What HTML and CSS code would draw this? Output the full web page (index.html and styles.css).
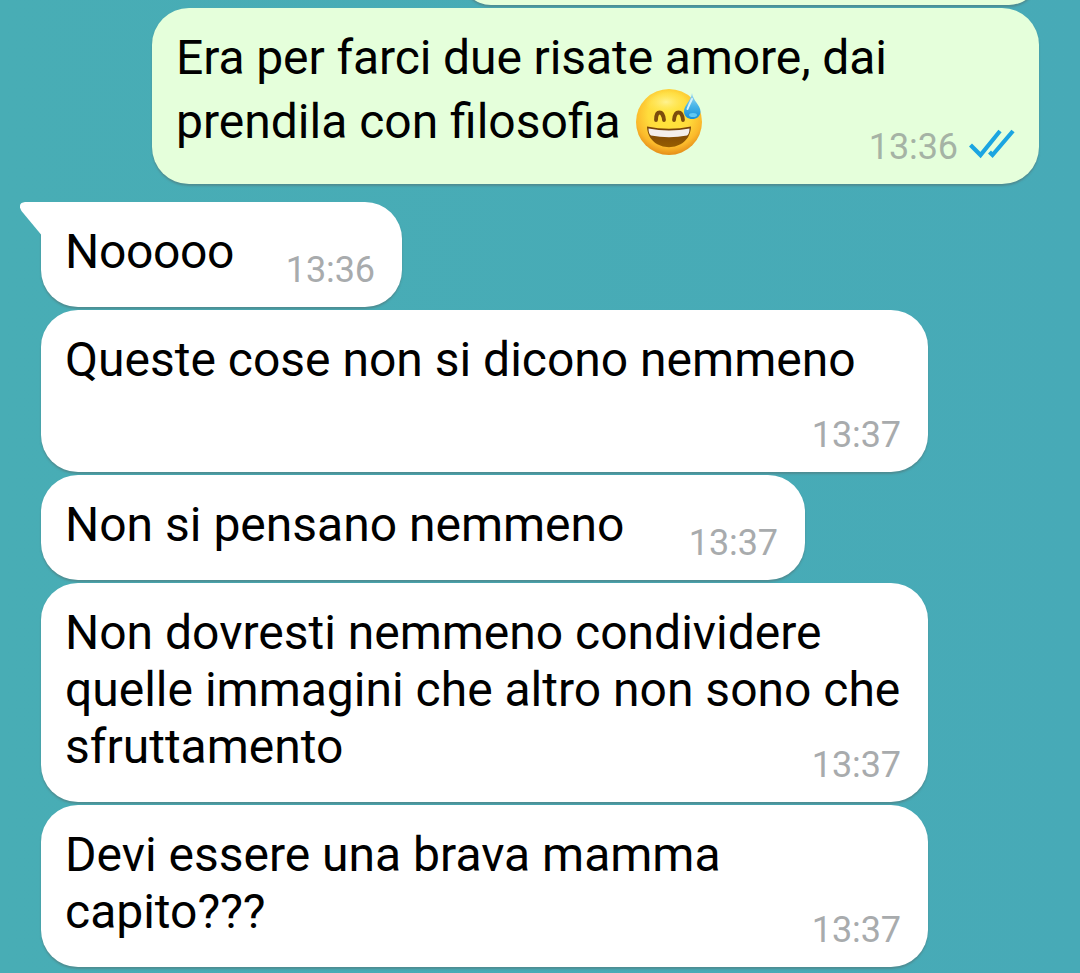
FILE: index.html
```html
<!DOCTYPE html>
<html lang="it">
<head>
<meta charset="utf-8">
<title>Chat</title>
<link rel="stylesheet" href="styles.css">
</head>
<body>
<main class="chat">
  <div class="bubble sent previous"></div>
  <article class="bubble sent">
    <p class="text"><span class="snug">Era per farci due risate amore, dai</span><br>prendila con filosofia <svg class="emoji" viewBox="0 0 68 68" role="img" aria-label="😅">
      <defs>
        <radialGradient id="face" cx=".5" cy=".38" r=".63"><stop offset="0" stop-color="#ffe63b"/><stop offset=".5" stop-color="#ffdc3c"/><stop offset=".8" stop-color="#fbb92b"/><stop offset="1" stop-color="#e38a18"/></radialGradient>
        <radialGradient id="shine" cx=".5" cy=".5" r=".5"><stop offset="0" stop-color="#fff6a0" stop-opacity=".85"/><stop offset="1" stop-color="#ffe95b" stop-opacity="0"/></radialGradient>
        <linearGradient id="mouth" x1="0" y1="0" x2="0" y2="1"><stop offset="0" stop-color="#744009"/><stop offset="1" stop-color="#965d00"/></linearGradient>
        <linearGradient id="drop" x1="0" y1="0" x2="0" y2="1"><stop offset="0" stop-color="#a5dcf2"/><stop offset=".5" stop-color="#48b5e8"/><stop offset="1" stop-color="#168fd8"/></linearGradient>
      </defs>
      <circle cx="34" cy="34" r="33" fill="url(#face)"/>
      <ellipse cx="31" cy="14" rx="22" ry="12" fill="url(#shine)"/>
      <path d="M21 32C21 22 28 22 29 32M39 32C40 22 47 22 48 32" fill="none" stroke="#7b4c0d" stroke-width="3.800" stroke-linecap="round"/>
      <path d="M12 38.500Q34 43 56 38.500C55 66 13 66 12 38.500Z" fill="url(#mouth)"/>
      <path d="M13.500 40.500Q34 44.500 54.500 40.500Q54.500 46 52 47.500Q34 51 16 47.500Q13.500 46 13.500 40.500Z" fill="#f4efeb"/>
      <path d="M57 5C58 13 65.500 17 65.500 23.500C65.500 33.500 49 33.500 49 23.500C49 17 56 13 57 5Z" fill="url(#drop)"/>
      <path d="M57 11Q54 17 52.500 21" fill="none" stroke="#d4f0fa" stroke-width="2" stroke-linecap="round"/>
      <ellipse cx="58" cy="27" rx="4" ry="2" fill="#62c8f1"/>
    </svg></p>
    <footer class="meta"><time>13:36</time><svg class="ticks" viewBox="0 0 46 32"><path d="M1.500 17L11.500 27L31 3M20.500 24L23.500 27L44 3" fill="none" stroke="#1ba5e1" stroke-width="4.200"/></svg></footer>
  </article>
  <article class="bubble received first"><svg class="tail" viewBox="0 0 24 34"><path d="M24 0H5Q-3 1 1.500 9L21 32.500L24 34Z" fill="#fff"/></svg><p class="text">Nooooo</p><footer class="meta"><time>13:36</time></footer></article>
  <article class="bubble received wide"><p class="text">Queste cose non si dicono nemmeno<br>&nbsp;</p><footer class="meta"><time>13:37</time></footer></article>
  <article class="bubble received medium"><p class="text">Non si pensano nemmeno</p><footer class="meta"><time>13:37</time></footer></article>
  <article class="bubble received wide"><p class="text">Non dovresti nemmeno condividere<br>quelle immagini che altro non sono che<br>sfruttamento</p><footer class="meta"><time>13:37</time></footer></article>
  <article class="bubble received wide"><p class="text">Devi essere una brava mamma<br>capito???</p><footer class="meta"><time>13:37</time></footer></article>
</main>
</body>
</html>
```
FILE: styles.css
```css
* { box-sizing: border-box; }
body {
  margin: 0;
  height: 973px;
  overflow: hidden;
  font-family: Roboto, sans-serif;
  background: linear-gradient(90deg, #48adb5, #47aab7);
}
.chat {
  display: flex;
  flex-direction: column;
  gap: 3px;
  padding: 0 41px;
}
.bubble {
  position: relative;
  flex: none;
  padding: 21px 24px 27px;
  border-radius: 37px;
  color: #000;
  box-shadow: 0 2px 2px rgba(85, 105, 105, .45);
}
.sent {
  align-self: flex-end;
  width: 887px;
  background: #e5ffdb;
}
.previous {
  width: 578px;
  height: 60px;
  margin-top: -55px;
}
.received {
  align-self: flex-start;
  background: #fff;
}
.first {
  width: 361px;
  margin-top: 15px;
  border-top-left-radius: 0;
}
.first .text { letter-spacing: -.35px; }
.medium { width: 764px; }
.wide { width: 887px; }
.text {
  margin: 0;
  font-size: 48px;
  line-height: 57px;
  white-space: nowrap;
}
.snug { letter-spacing: -.1px; }
.sent .text { line-height: 64px; }
.sent:not(.previous) { height: 176px; padding-top: 18px; }
.emoji {
  width: 68px;
  height: 68px;
  margin: -8px 0 -8px 2px;
  vertical-align: -9.500px;
}
.meta {
  position: absolute;
  right: 27px;
  bottom: 16px;
  display: flex;
  align-items: center;
  gap: 11px;
  font-size: 36px;
  line-height: 42px;
  letter-spacing: -.1px;
  color: #a8abad;
}
.sent .meta { right: 24px; color: #a5b3a5; }
.ticks {
  width: 46px;
  height: 32px;
  margin-top: -6px;
}
.tail {
  position: absolute;
  top: 0;
  left: -21px;
  width: 24px;
  height: 34px;
}
```
